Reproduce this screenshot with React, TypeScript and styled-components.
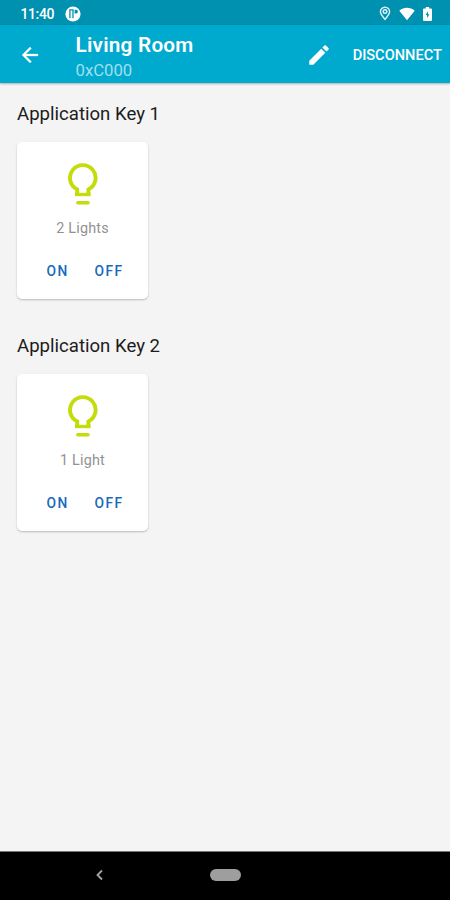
import React from "react";
import styled, { createGlobalStyle } from "styled-components";

const GlobalStyle = createGlobalStyle`
  * { box-sizing: border-box; }
  body { margin: 0; background: #f4f4f4; font-family: Roboto, "Liberation Sans", sans-serif; }
  button { font-family: inherit; border: 0; padding: 0; background: none; cursor: pointer; }
  svg { display: block; flex: none; }
`;

const Screen = styled.div`
  width: 450px;
  height: 900px;
  display: flex;
  flex-direction: column;
  overflow: hidden;
  background: #f4f4f4;
`;

const StatusBar = styled.div`
  height: 25px;
  flex: none;
  display: flex;
  align-items: center;
  justify-content: space-between;
  padding: 2px 18px 0 20.5px;
  background: #0090b0;
  color: #fff;
`;

const StatusGroup = styled.div<{ $gap: number }>`
  display: flex;
  align-items: center;
  gap: ${(p) => p.$gap}px;
`;

const Clock = styled.span`
  width: 34px;
  font-size: 14px;
  line-height: 16px;
  font-weight: 500;
  letter-spacing: -0.4px;
  white-space: nowrap;
`;

const AppBar = styled.header`
  height: 58px;
  flex: none;
  display: flex;
  align-items: center;
  padding-right: 8px;
  background: #00a9ce;
  color: #fff;
  box-shadow: 0 1px 2px rgba(0, 0, 0, 0.3);
`;

const BackButton = styled.button`
  margin-left: 18px;
  padding-top: 1px;
  width: 24px;
  color: #fff;
`;

const Titles = styled.div`
  margin-left: 33.5px;
  padding-top: 7px;
  flex: 1;
`;

const Title = styled.h1`
  margin: 0;
  font-size: 20.7px;
  line-height: 25px;
  font-weight: 600;
  letter-spacing: 0.25px;
`;

const Subtitle = styled.div`
  font-size: 16.7px;
  line-height: 25px;
  color: #a2dfee;
`;

const EditButton = styled.button`
  padding-top: 2px;
  color: #fff;
`;

const DisconnectButton = styled.button`
  margin-left: 20.5px;
  padding-top: 2px;
  width: 89.5px;
  color: #fff;
  font-size: 14.6px;
  font-weight: 500;
  white-space: nowrap;
`;

const Content = styled.main`
  flex: 1;
  display: flex;
  flex-direction: column;
  gap: 34px;
  padding: 18px 17px;
`;

const KeyGroup = styled.section`
  height: 198px;
`;

const GroupName = styled.h2`
  margin: 0 0 15px;
  font-size: 18.6px;
  line-height: 26px;
  font-weight: 400;
  color: #1c1c1c;
`;

const Card = styled.article`
  width: 131px;
  height: 157px;
  display: flex;
  flex-direction: column;
  align-items: center;
  padding-top: 21px;
  border-radius: 5px;
  background: #fff;
  box-shadow: 0 1px 2px rgba(0, 0, 0, 0.24);
`;

const Count = styled.div`
  margin-top: 13px;
  font-size: 14.4px;
  line-height: 20px;
  letter-spacing: 0.2px;
  color: #929292;
`;

const Actions = styled.div`
  display: flex;
  gap: 26px;
  margin: 22px 0 0 5px;
`;

const ActionButton = styled.button`
  font-size: 13.8px;
  line-height: 20px;
  font-weight: 500;
  letter-spacing: 1.4px;
  color: #1968bd;
`;

const NavBar = styled.nav`
  height: 49px;
  flex: none;
  display: grid;
  grid-template-columns: 95px 115px 1fr;
  align-items: center;
  padding-bottom: 2px;
  background: #000;
  border-top: 1px solid #777;
`;

const NavBack = styled.button`
  grid-column: 2;
`;

const HomePill = styled.button`
  width: 31px;
  height: 12px;
  border-radius: 6px;
  background: #9e9e9e;
`;

const Bulb = () => (
  <svg width="32" height="43" viewBox="0 0 32 43" fill="none" stroke="#c4dc0b" strokeWidth="3.9">
    <path d="M10.2 31.5V26.4A12.8 12.8 0 1 1 21.4 26.4V31.5" />
    <path d="M8 31.5H23.6" strokeWidth="3.4" />
    <path d="M10.8 39.8H21" strokeLinecap="round" strokeWidth="3.5" />
  </svg>
);

const groups = [
  { name: "Application Key 1", count: "2 Lights" },
  { name: "Application Key 2", count: "1 Light" },
];

export default function App() {
  return (
    <Screen>
      <GlobalStyle />
      <StatusBar>
        <StatusGroup $gap={10}>
          <Clock>11:40</Clock>
          <svg width="16" height="16" viewBox="0 0 16 16">
            <circle cx="8" cy="8" r="7.6" fill="#fff" />
            <path d="M4.9 12.2V3.8H8V12.2" fill="none" stroke="#0090b0" strokeWidth="1.3" />
            <path d="M9.6 3.8H11.5A2 2 0 0 1 11.5 7.6H9.6Z" fill="#0090b0" />
          </svg>
        </StatusGroup>
        <StatusGroup $gap={8}>
          <svg width="12" height="15" viewBox="0 0 12 15" fill="none" stroke="#e1f3f7">
            <path d="M6 13.3C3.8 10.6 1.4 8.3 1.4 5.8A4.6 4.6 0 0 1 10.6 5.8C10.6 8.3 8.2 10.6 6 13.3Z" strokeWidth="1.4" />
            <circle cx="6" cy="5.6" r="1.8" strokeWidth="1.4" />
          </svg>
          <svg width="16" height="14" viewBox="0 0 16 14">
            <path d="M0.3 3.7C4.8-.1 11.2-.1 15.7 3.7L8 13.3Z" fill="#fff" />
          </svg>
          <svg width="9" height="14" viewBox="0 0 9 14">
            <path d="M2.8 0H6.2V1.4H8Q9 1.4 9 2.4V13Q9 14 8 14H1Q0 14 0 13V2.4Q0 1.4 1 1.4H2.8Z" fill="#fff" />
            <path d="M5 4.2L2.6 8.1H4.1V11.3L6.4 7.3H5Z" fill="#0090b0" />
          </svg>
        </StatusGroup>
      </StatusBar>
      <AppBar>
        <BackButton aria-label="Back">
          <svg width="24" height="26" viewBox="0 0 24 24" fill="currentColor" stroke="currentColor" strokeWidth=".3">
            <path d="M20 11H7.83l5.59-5.59L12 4l-8 8 8 8 1.41-1.41L7.83 13H20v-2z" />
          </svg>
        </BackButton>
        <Titles>
          <Title>Living Room</Title>
          <Subtitle>0xC000</Subtitle>
        </Titles>
        <EditButton aria-label="Edit">
          <svg width="26" height="26" viewBox="0 0 24 24" fill="currentColor">
            <path d="M3 17.25V21h3.75L17.81 9.94l-3.75-3.75L3 17.25zM20.71 7.04a1 1 0 0 0 0-1.41l-2.34-2.34a1 1 0 0 0-1.41 0l-1.83 1.83 3.75 3.75 1.83-1.83z" />
          </svg>
        </EditButton>
        <DisconnectButton>DISCONNECT</DisconnectButton>
      </AppBar>
      <Content>
        {groups.map((group) => (
          <KeyGroup key={group.name}>
            <GroupName>{group.name}</GroupName>
            <Card>
              <Bulb />
              <Count>{group.count}</Count>
              <Actions>
                <ActionButton>ON</ActionButton>
                <ActionButton>OFF</ActionButton>
              </Actions>
            </Card>
          </KeyGroup>
        ))}
      </Content>
      <NavBar>
        <NavBack aria-label="Back">
          <svg width="10" height="14" viewBox="0 0 10 14" fill="none" stroke="#a5a5a5" strokeWidth="1.8">
            <path d="M7 2.5L2.5 7L7 11.5" />
          </svg>
        </NavBack>
        <HomePill aria-label="Home" />
      </NavBar>
    </Screen>
  );
}
